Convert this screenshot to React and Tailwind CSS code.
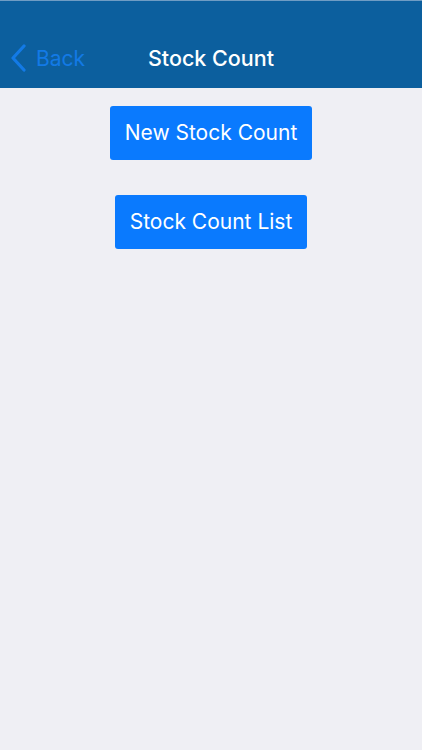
export default function App() {
  const font = { fontFamily: '"Inter", "Noto Sans", sans-serif' };
  return (
    <div className="w-[422px] h-[750px] bg-[#efeff4] flex flex-col" style={font}>
      <div className="h-[88px] bg-[#0c5f9e] border-t border-[#6f9cc4] flex items-end pb-[14px] relative">
        <div className="flex items-center pl-[10px] text-[#137ae6] text-[21px] gap-[9px]">
          <svg width="17" height="28" viewBox="0 0 17 28" fill="none">
            <path d="M14 2 L3 14 L14 26" stroke="#137ae6" strokeWidth="3.2" strokeLinecap="round" strokeLinejoin="round" />
          </svg>
          <span>Back</span>
        </div>
        <div className="absolute left-0 right-0 bottom-[14px] text-center text-white text-[21.5px] font-medium pointer-events-none">
          Stock Count
        </div>
      </div>
      <div className="flex flex-col items-center pt-[18px] gap-[35px]">
        <button className="bg-[#0a7afe] text-white text-[21px] rounded-[3px] h-[54px] px-[15px]">New Stock Count</button>
        <button className="bg-[#0a7afe] text-white text-[21px] rounded-[3px] h-[54px] px-[15px]">Stock Count List</button>
      </div>
    </div>
  );
}
